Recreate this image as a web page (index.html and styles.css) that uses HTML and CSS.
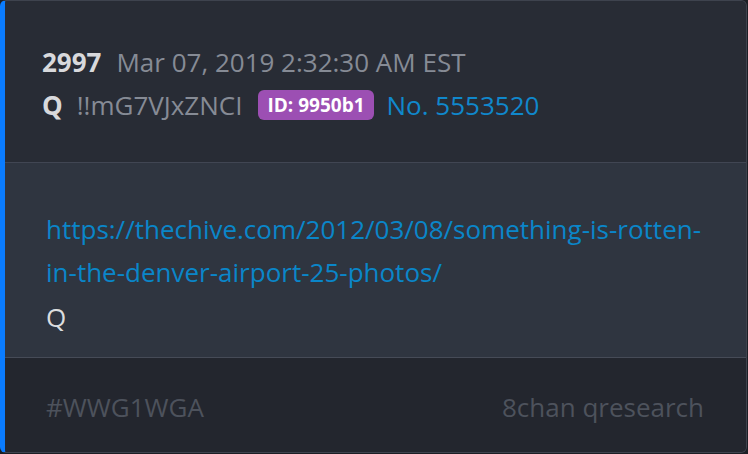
FILE: index.html
```html
<!DOCTYPE html>
<html>
<head>
<meta charset="utf-8">
<link rel="stylesheet" href="styles.css">
</head>
<body>
<div class="card">
  <div class="head">
    <div class="row"><span class="num">2997</span><span class="date">Mar 07, 2019 2:32:30 AM EST</span></div>
    <div class="row"><span class="name">Q</span><span class="trip">!!mG7VJxZNCI</span><span class="badge">ID: 9950b1</span><span class="no">No. 5553520</span></div>
  </div>
  <div class="body">
    <a class="link" href="#">https://thechive.com/2012/03/08/something-is-rotten-in-the-denver-airport-25-photos/</a>
    <div class="sig">Q</div>
  </div>
  <div class="foot">
    <span>#WWG1WGA</span>
    <span>8chan qresearch</span>
  </div>
</div>
</body>
</html>
```
FILE: styles.css
```css
html, body {
  margin: 0;
  padding: 0;
  background: #1c1f25;
}
body {
  width: 748px;
  height: 454px;
  font-family: "Open Sans", "Noto Sans", sans-serif;
  font-size: 26px;
}
.card {
  box-sizing: border-box;
  width: 747px;
  height: 453px;
  border: 1px solid #3e434e;
  border-left: 5px solid #0a7cff;
  border-radius: 6px;
  overflow: hidden;
  display: flex;
  flex-direction: column;
  background: #282c35;
}
.head {
  height: 162px;
  box-sizing: border-box;
  padding: 39px 0 0 37px;
  border-bottom: 1px solid #414653;
  background: #282c35;
}
.row {
  display: flex;
  align-items: center;
  height: 43px;
  white-space: nowrap;
}
.num {
  font-weight: 700;
  color: #d8d9dc;
  margin-right: 15px;
}
.name {
  font-weight: 700;
  color: #d8d9dc;
  margin-right: 14px;
}
.date, .trip {
  color: #868b95;
}
.trip { margin-right: 16px; }
.badge {
  background: #9c4fb3;
  color: #fff;
  font-weight: 700;
  font-size: 19px;
  padding: 0 9px;
  height: 30px;
  line-height: 30px;
  border-radius: 6px;
  margin-right: 13px;
}
.no {
  color: #1088cc;
}
.body {
  height: 195px;
  box-sizing: border-box;
  padding: 45px 40px 0 41px;
  background: #2f3540;
  border-bottom: 1px solid #464b57;
  line-height: 43px;
}
.link {
  color: #0a86c9;
  text-decoration: none;
  display: block;
  width: 665px;
}
.sig {
  color: #dcdddf;
  line-height: 46px;
}
.foot {
  flex: 1;
  background: #23262e;
  display: flex;
  justify-content: space-between;
  align-items: center;
  padding: 3px 42px 0 41px;
  color: #4d525c;
}
```
